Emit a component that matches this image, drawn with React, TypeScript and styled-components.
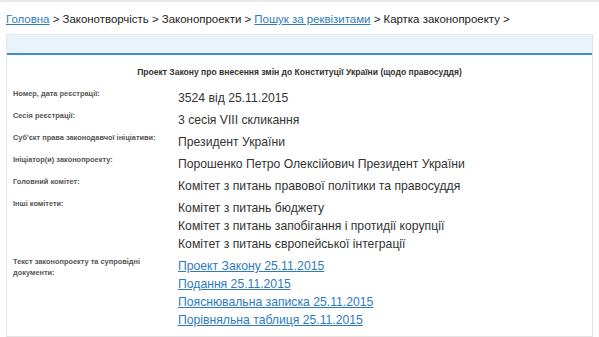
import styled, { createGlobalStyle } from "styled-components";

const GlobalStyle = createGlobalStyle`
  body {
    margin: 0;
    background: #fff;
    font-family: "Liberation Sans", Arial, sans-serif;
  }
`;

const TopBar = styled.div`
  height: 2px;
  background: #e9e9e9;
`;

const Breadcrumbs = styled.div`
  padding: 8px 6px 0;
  height: 18px;
  line-height: 18px;
  font-size: 11.45px;
  color: #222;
  margin-bottom: 6px;
  white-space: nowrap;
`;

const CrumbLink = styled.a`
  color: #2d7bbd;
  text-decoration: underline;
`;

const Panel = styled.div`
  margin: 0 6px;
  border: 1px solid #e4e4e4;
  border-top: none;
  padding-bottom: 5px;
`;

const PanelHead = styled.div`
  height: 18px;
  background: #e9f3fc;
  border-top: 1px solid #e0e8f0;
  border-bottom: 2px solid #4a8bc7;
`;

const Title = styled.div`
  padding: 11px 6px 0;
  line-height: 12px;
  font-size: 8.55px;
  font-weight: bold;
  color: #333;
  text-align: center;
  margin-bottom: 9px;
`;

const Row = styled.div`
  display: grid;
  grid-template-columns: 160px 1fr;
  column-gap: 5px;
  padding: 0 6px 0 6px;
`;

const Label = styled.div`
  padding-top: 1px;
  font-size: 7.4px;
  line-height: 11px;
  font-weight: bold;
  color: #555;
`;

const Values = styled.div`
  padding: 2px 0;
  display: flex;
  flex-direction: column;
`;

const Value = styled.div<{ $link?: boolean }>`
  font-size: 12.2px;
  line-height: 18px;
  color: ${(p) => (p.$link ? "#2d7bbd" : "#333")};
  text-decoration: ${(p) => (p.$link ? "underline" : "none")};
  white-space: nowrap;
`;

const rows: { label: string; values: string[]; links?: boolean }[] = [
  { label: "Номер, дата реєстрації:", values: ["3524 від 25.11.2015"] },
  { label: "Сесія реєстрації:", values: ["3 сесія VIII скликання"] },
  {
    label: "Суб'єкт права законодавчої ініціативи:",
    values: ["Президент України"],
  },
  {
    label: "Ініціатор(и) законопроекту:",
    values: ["Порошенко Петро Олексійович Президент України"],
  },
  {
    label: "Головний комітет:",
    values: ["Комітет з питань правової політики та правосуддя"],
  },
  {
    label: "Інші комітети:",
    values: [
      "Комітет з питань бюджету",
      "Комітет з питань запобігання і протидії корупції",
      "Комітет з питань європейської інтеграції",
    ],
  },
  {
    label: "Текст законопроекту та супровідні документи:",
    values: [
      "Проект Закону 25.11.2015",
      "Подання 25.11.2015",
      "Пояснювальна записка 25.11.2015",
      "Порівняльна таблиця 25.11.2015",
    ],
    links: true,
  },
];

export default function App() {
  return (
    <>
      <GlobalStyle />
      <TopBar />
      <Breadcrumbs>
        <CrumbLink>Головна</CrumbLink> &gt; Законотворчість &gt; Законопроекти
        &gt; <CrumbLink>Пошук за реквізитами</CrumbLink> &gt; Картка
        законопроекту &gt;
      </Breadcrumbs>
      <Panel>
        <PanelHead />
        <Title>
          Проект Закону про внесення змін до Конституції України (щодо
          правосуддя)
        </Title>
        {rows.map((r) => (
          <Row key={r.label}>
            <Label>{r.label}</Label>
            <Values>
              {r.values.map((v) => (
                <Value key={v} $link={r.links}>
                  {v}
                </Value>
              ))}
            </Values>
          </Row>
        ))}
      </Panel>
    </>
  );
}
